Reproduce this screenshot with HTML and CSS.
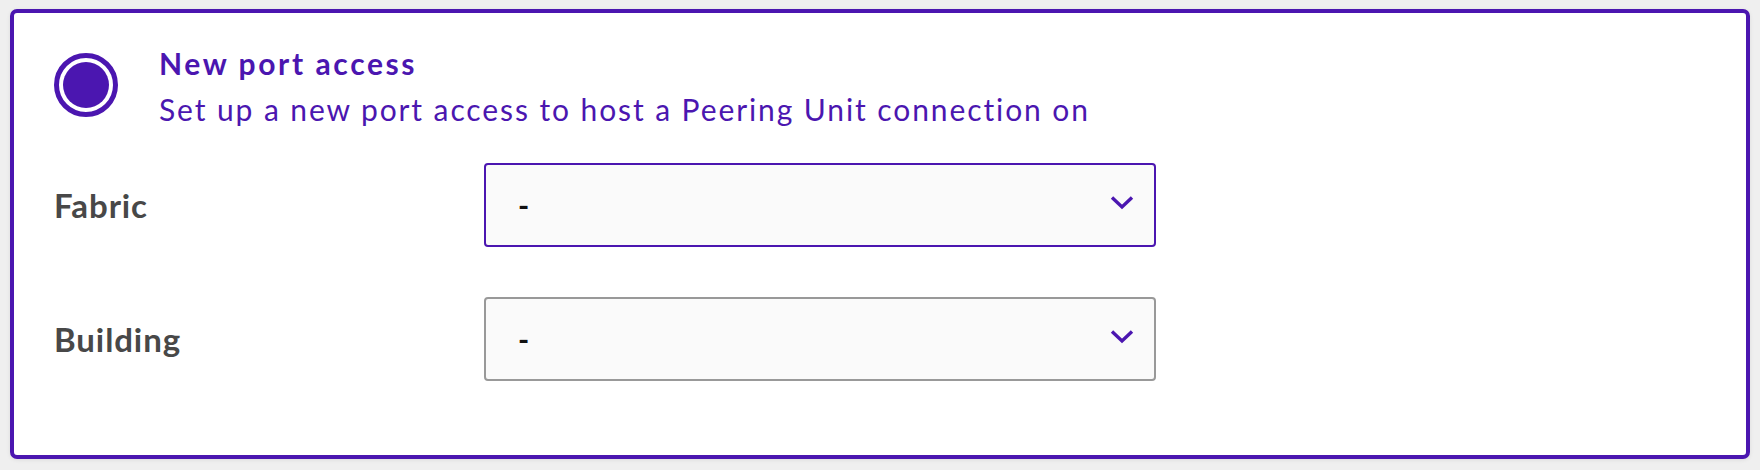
FILE: index.html
```html
<!DOCTYPE html>
<html lang="en">
<head>
<meta charset="utf-8">
<title>New port access</title>
<link rel="stylesheet" href="styles.css">
</head>
<body>
<div class="card">
  <div class="head">
    <span class="radio"><span class="radio-dot"></span></span>
    <div class="head-text">
      <div class="title">New port access</div>
      <div class="subtitle">Set up a new port access to host a Peering Unit connection on</div>
    </div>
  </div>
  <div class="form">
    <label class="label">Fabric</label>
    <div class="select select-active">
      <span class="value">-</span>
      <svg class="chevron" width="24" height="15" viewBox="0 0 24 15"><polyline points="2,2.5 12,12 22,2.5" fill="none" stroke="#4b16b0" stroke-width="3.4"/></svg>
    </div>
    <label class="label">Building</label>
    <div class="select">
      <span class="value">-</span>
      <svg class="chevron" width="24" height="15" viewBox="0 0 24 15"><polyline points="2,2.5 12,12 22,2.5" fill="none" stroke="#4b16b0" stroke-width="3.4"/></svg>
    </div>
  </div>
</div>
</body>
</html>
```
FILE: styles.css
```css
* { box-sizing: border-box; }
html, body { margin: 0; }
body {
  background: #efefef;
  padding: 9px 10px 11px 10px;
  font-family: Lato, "Noto Sans", sans-serif;
}
.card {
  background: #ffffff;
  border: 4px solid #4b16b0;
  border-radius: 7px;
  padding: 32px 40px 74px 40px;
  height: 450px;
  box-shadow: 0 1px 4px rgba(0,0,0,0.08);
}
.head {
  display: flex;
  align-items: flex-start;
  gap: 41px;
}
.radio {
  margin-top: 8px;
  width: 64px;
  height: 64px;
  border-radius: 50%;
  border: 5px solid #4b16b0;
  padding: 4px;
  display: flex;
  flex: none;
}
.radio-dot {
  flex: 1;
  border-radius: 50%;
  background: #4b16b0;
}
.title {
  color: #4b16b0;
  font-weight: 700;
  font-size: 30px;
  line-height: 36px;
  letter-spacing: 2.6px;
}
.subtitle {
  color: #4b16b0;
  font-size: 30px;
  line-height: 36px;
  margin-top: 10px;
  letter-spacing: 1.9px;
}
.form {
  margin-top: 36px;
  display: grid;
  grid-template-columns: 430px 672px;
  grid-auto-rows: 84px;
  row-gap: 50px;
  align-items: center;
}
.label {
  color: #484848;
  font-weight: 700;
  font-size: 33px;
  line-height: 40px;
  letter-spacing: 0.9px;
}
.select {
  height: 84px;
  border: 2px solid #999999;
  border-radius: 4px;
  background: #fafafa;
  display: flex;
  align-items: center;
  justify-content: space-between;
  padding: 0 20px 0 32px;
}
.select-active {
  border-color: #4b16b0;
}
.value {
  font-size: 30px;
  font-weight: 700;
  color: #111111;
}
.chevron {
  display: block;
  margin-top: -6px;
}
```
